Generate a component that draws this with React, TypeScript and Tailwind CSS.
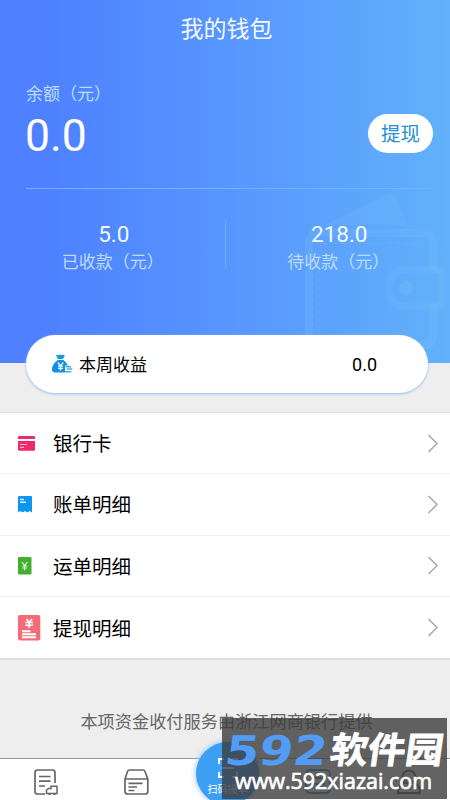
import React from 'react';

interface MenuItem {
  label: string;
  icon: React.ReactNode;
}

const BankCardIcon = () => (
  <svg width="17" height="15" viewBox="0 0 17 15">
    <path d="M1.2 0h14.6q1.2 0 1.2 1.2V3H0V1.200Q0 0 1.200 0z" fill="#f0286c" />
    <path d="M0 5h17v8.500q0 1.200-1.200 1.200H1.200Q0 14.700 0 13.500z" fill="#f0286c" />
    <path d="M2 8.500h7M2 11.300h4" stroke="#fbb3cc" strokeWidth="1.200" />
  </svg>
);

const BillIcon = () => (
  <svg width="14" height="17" viewBox="0 0 14 17">
    <path d="M1 0h12q1 0 1 1v15.500l-2.300-1.500-2.300 1.500L7 15l-2.400 1.500L2.300 15 0 16.500V1q0-1 1-1z" fill="#0c96f0" />
    <path d="M2 3.500h4M2 6.300h6" stroke="#d5efff" strokeWidth="1.400" />
  </svg>
);

const WaybillIcon = () => (
  <svg width="14" height="18" viewBox="0 0 14 18">
    <rect width="13.500" height="17.500" rx="1.300" fill="#44af2c" />
    <path d="M4 5l2.700 3.500L9.400 5M6.700 8.500v5M4.300 9h4.800M4.300 11h4.800" stroke="#e3f8db" strokeWidth="1.100" fill="none" />
  </svg>
);

const WithdrawIcon = () => (
  <svg width="23" height="26" viewBox="0 0 23 26">
    <rect width="22.300" height="25.500" rx="2" fill="#f36c78" />
    <path d="M8.300 4l2.900 3.200L14.100 4M11.200 7v6M7.300 7.500h7.800M7.300 10.300h7.800" stroke="#fff" strokeWidth="1.600" fill="none" />
    <path d="M4 16.300h8.500M4 19.200h14M4 22.200h14" stroke="#fff" strokeWidth="1.900" />
  </svg>
);

const MoneyBagIcon = () => (
  <svg width="21" height="20" viewBox="0 0 21 20">
    <path d="M4 1.200q1.500-1 2.600 0Q8.500-.4 10.200 1.200q1.500-1 2.600 0L11 5H6z" fill="#1796e4" />
    <path d="M5.800 6h5.600q5.400 4.300 5.100 9.500-.2 3.100-3.500 3.100H3.200Q0 18.600 0 15.300 0 10 5.800 6z" fill="#0f8fe8" />
    <path d="M5.800 8.500l2.700 3.300 2.700-3.300M8.500 12v4.500M6 12.200h5M6 14.300h5" stroke="#fff" strokeWidth="1.200" fill="none" />
    <path d="M13 11.500h7.500v7.500H13z" fill="#fff" />
    <path d="M13.600 12.700h5.600M14.700 15.100h5.600M13 17.700h6.300" stroke="#4aaeee" strokeWidth="1.500" />
  </svg>
);

const WalletArt = () => (
  <svg className="absolute right-0 top-[188px]" width="160" height="175" viewBox="0 0 160 175" fill="none">
    <path d="M34 37L98 6q6-2 9 4l11 31q-4-4-10-4z" fill="#8fc7ff" fillOpacity=".14" />
    <g stroke="#8fc7ff" strokeOpacity=".15">
      <path d="M143 82V56q0-11-10-11H29q-10 0-10 10v92q0 10 10 10h104q10 0 10-10v-30" strokeWidth="8" />
      <path d="M151 82h-35q-17 0-17 18t17 18h35z" strokeWidth="7" />
      <path d="M29 151V68q0-13 12-13h80q9 0 9 11v10" strokeWidth="1.500" strokeDasharray="5 3" />
    </g>
    <circle cx="116" cy="100" r="7" fill="#8fc7ff" fillOpacity=".2" />
  </svg>
);

const OrderTabIcon = () => (
  <svg width="24" height="27" viewBox="0 0 24 27" fill="none" stroke="#666" strokeWidth="1.700">
    <path d="M11 25H3.500Q1 25 1 22.500V3.500Q1 1 3.500 1h15Q21 1 21 3.500V14" />
    <path d="M5 7.500h11.500M5 12.200h11.500M5 17h6" />
    <path d="M12.500 24.500v-3.500l2-1.500h2.500v-2.300h6v7.300z" strokeWidth="1.500" />
    <path d="M14.500 25h2M19.500 25h2" strokeWidth="2" />
  </svg>
);

const BoxTabIcon = () => (
  <svg width="25" height="27" viewBox="0 0 25 27" fill="none" stroke="#666" strokeWidth="1.700">
    <path d="M1 10L3.500 2.500Q4 1 5.500 1h13.500q1.500 0 2 1.500L23.800 10v12.500q0 2.500-2.500 2.500H3.500Q1 25 1 22.500zM1 10h22.800" />
    <path d="M4.500 14.300h14M4.500 18h8.500M4.500 21.500h6" />
  </svg>
);

const MessageTabIcon = () => (
  <svg width="26" height="26" viewBox="0 0 26 26" fill="none" stroke="#2f9bef" strokeWidth="2">
    <rect x="1" y="1" width="24" height="23" rx="4" />
    <path d="M6 9h14M6 15h14" />
  </svg>
);

const UserTabIcon = () => (
  <svg width="24" height="26" viewBox="0 0 24 26" fill="none" stroke="#666" strokeWidth="2">
    <circle cx="12" cy="8" r="6.500" />
    <path d="M7.500 13.500Q1 16 1 24h22q0-8-6.500-10.500" />
  </svg>
);

const menuItems: MenuItem[] = [
  { label: '银行卡', icon: <BankCardIcon /> },
  { label: '账单明细', icon: <BillIcon /> },
  { label: '运单明细', icon: <WaybillIcon /> },
  { label: '提现明细', icon: <WithdrawIcon /> },
];

const MenuRow: React.FC<{ item: MenuItem; last: boolean }> = ({ item, last }) => (
  <button className={`flex h-[61.3px] w-full items-center pr-[11px] pl-[18px] text-left ${last ? '' : 'border-b border-[#f0f0f0]'}`}>
    <span className="flex w-[35px] shrink-0">{item.icon}</span>
    <span className="flex-1 pt-[4px] text-[19.5px] leading-7 text-black">{item.label}</span>
    <svg width="12" height="19" viewBox="0 0 12 19" fill="none" stroke="#a9a9a9" strokeWidth="1.500">
      <path d="M1.500 1l8.500 8.500L1.500 18" />
    </svg>
  </button>
);

const Stat: React.FC<{ value: string; label: string }> = ({ value, label }) => (
  <div className="flex-1 text-center">
    <p className="pt-0.5 pl-[3px] text-[22.5px] leading-[26px] text-[#f4f9ff]">{value}</p>
    <p className="mt-[3px] pl-px text-[17px] leading-6 text-[#bcdcff]">{label}</p>
  </div>
);

const SiteBadge = () => (
  <div className="absolute top-[718px] left-[222px] h-[81px] w-[225px] bg-[#3c3c3c]/80">
    <svg width="225" height="81" viewBox="0 0 225 81">
      <g transform="skewX(-8)" fontWeight="700">
        <text x="8" y="47" fontSize="41" textLength="102" lengthAdjust="spacingAndGlyphs" fill="#529cf6" fontFamily="'DejaVu Sans', sans-serif">592</text>
        <text x="113" y="45" fontSize="36" textLength="113" lengthAdjust="spacingAndGlyphs" fill="#fff" stroke="#fff" strokeWidth=".8" fontFamily="'Noto Sans CJK SC', sans-serif">软件园</text>
      </g>
      <text x="13" y="71" fontSize="22" textLength="197" lengthAdjust="spacingAndGlyphs" fill="#fff" stroke="#fff" strokeWidth=".7" fontFamily="'Open Sans', sans-serif">www.592xiazai.com</text>
    </svg>
  </div>
);

const App: React.FC = () => {
  return (
    <div className="relative flex h-[800px] w-[450px] flex-col overflow-hidden bg-[#eeeeee] font-[Roboto,'Noto_Sans_CJK_SC',sans-serif]">
      <header className="relative h-[363px] shrink-0 bg-linear-to-r from-[#4e80ff] from-10% via-[#5898ff] via-55% to-[#62b1fa] pr-[17px] pl-[26px]">
        <WalletArt />
        <h1 className="relative -ml-[6px] pt-[14px] text-center text-[23px] leading-8 text-[#f4f9ff]">我的钱包</h1>
        <div className="relative mt-[35px] flex h-[108px] justify-between border-b border-[#6fb5ff]">
          <div>
            <p className="text-[17px] leading-6.5 text-[#bcdcff]">余额（元）</p>
            <p className="mt-1 -ml-px text-[44.5px] leading-[50px] text-white">0.0</p>
          </div>
          <button className="mt-[33px] h-[39px] w-[65px] rounded-full bg-white pt-[3px] text-[19.5px] text-[#258fd3]">提现</button>
        </div>
        <div className="relative mt-[30px] -mr-[17px] -ml-[26px] flex h-[50px]">
          <Stat value="5.0" label="已收款（元）" />
          <div className="w-px bg-[#70adff]" />
          <Stat value="218.0" label="待收款（元）" />
        </div>
      </header>

      <section className="relative -mt-[28px] ml-[26px] flex h-[58px] w-[402px] shrink-0 items-center rounded-full bg-white pr-[51px] pl-[26px] shadow-[0_1px_3px_#92bdf2]">
        <MoneyBagIcon />
        <span className="ml-[6px] flex-1 pt-[4px] text-[17px] text-black">本周收益</span>
        <span className="text-[18px] text-black">0.0</span>
      </section>

      <section className="mt-[19px] flex shrink-0 flex-col border-t border-b-2 border-[#dedede] bg-white">
        {menuItems.map((item, index) => (
          <MenuRow key={item.label} item={item} last={index === menuItems.length - 1} />
        ))}
      </section>

      <p className="mt-[49px] ml-[3px] text-center text-[17.2px] leading-6.5 text-[#666]">本项资金收付服务由浙江网商银行提供</p>

      <nav className="mt-auto flex h-[42px] shrink-0 border-t border-[#999] bg-white pt-[10px]">
        <div className="flex w-[90px] justify-center pl-px"><OrderTabIcon /></div>
        <div className="flex w-[90px] justify-center pl-0.5"><BoxTabIcon /></div>
        <div className="relative w-[90px]">
          <button className="absolute -top-[27px] left-[16px] flex size-[63px] flex-col items-center rounded-full bg-[#3c9ff3] pt-4 text-white shadow-[0_0_6px_#86bdf5]">
            <svg width="20" height="20" viewBox="0 0 20 20" fill="none" stroke="currentColor" strokeWidth="2">
              <path d="M6 1H1v5M14 1h5v5M6 19H1v-5M14 19h5v-5M4 10h12" />
            </svg>
            <span className="mt-1 text-[10px] leading-4">扫码接单</span>
          </button>
        </div>
        <div className="flex w-[90px] justify-center pl-[6px]"><MessageTabIcon /></div>
        <div className="flex w-[90px] justify-center pl-[7px]"><UserTabIcon /></div>
      </nav>

      <SiteBadge />
    </div>
  );
};

export default App;
